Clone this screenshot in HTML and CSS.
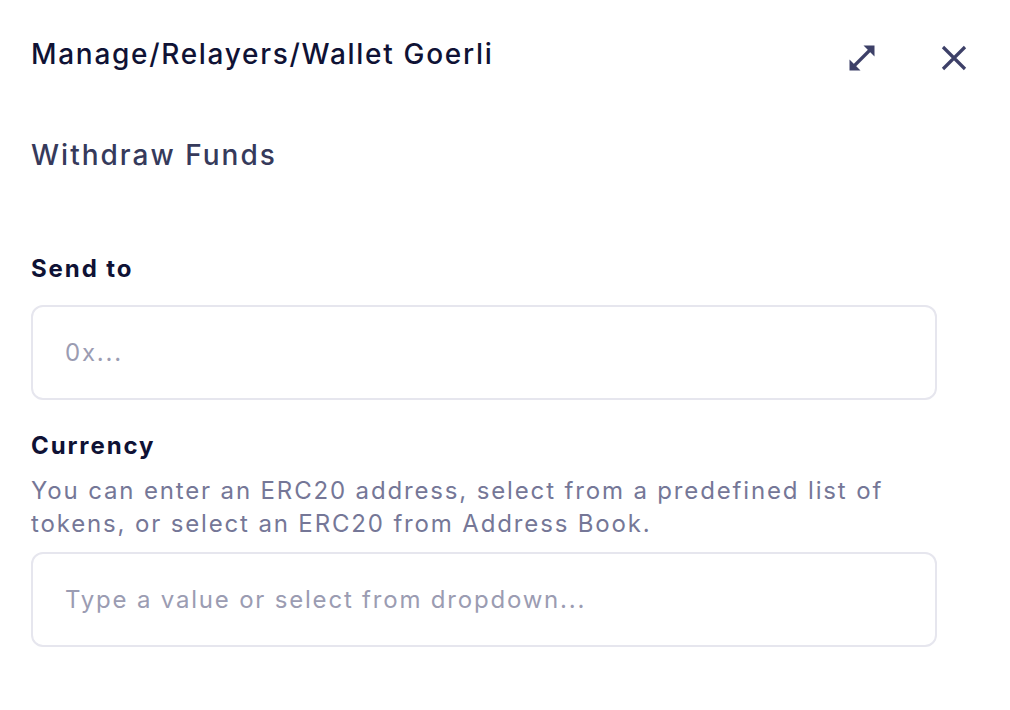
FILE: index.html
```html
<!DOCTYPE html>
<html>
<head>
<meta charset="utf-8">
<link rel="stylesheet" href="styles.css">
</head>
<body>
<div class="panel">
  <header class="head">
    <h1 class="title">Manage/Relayers/Wallet Goerli</h1>
    <div class="actions">
      <button class="icon-btn" aria-label="Expand">
        <svg width="26" height="26" viewBox="0 0 26 26"><path d="M4 22 L22 4" stroke="#3d4068" stroke-width="3.2" fill="none"/><path d="M14.5 0.5 H25.5 V11.5 Z" fill="#3d4068"/><path d="M0.5 14.5 V25.5 H11.5 Z" fill="#3d4068"/></svg>
      </button>
      <button class="icon-btn" aria-label="Close">
        <svg width="26" height="26" viewBox="0 0 26 26"><path d="M2 2 L24 24 M24 2 L2 24" stroke="#3d4068" stroke-width="3.2" fill="none"/></svg>
      </button>
    </div>
  </header>
  <h2 class="subtitle">Withdraw Funds</h2>
  <div class="field field-send">
    <label class="label">Send to</label>
    <div class="input"><span class="placeholder">0x...</span></div>
  </div>
  <div class="field field-currency">
    <label class="label">Currency</label>
    <p class="help">You can enter an ERC20 address, select from a predefined list of tokens, or select an ERC20 from Address Book.</p>
    <div class="input"><span class="placeholder">Type a value or select from dropdown...</span></div>
  </div>
</div>
</body>
</html>
```
FILE: styles.css
```css
* { box-sizing: border-box; }
html, body { margin: 0; padding: 0; background: #fff; }
body { font-family: Inter, "Noto Sans", sans-serif; }
.panel { padding: 30px 73px 0 31px; }
.head { display: flex; align-items: center; justify-content: space-between; height: 48px; }
.title { margin: 0; font-size: 28px; font-weight: 450; color: #0f1235; letter-spacing: 1.7px; }
.actions { display: flex; gap: 66px; margin-right: -30px; margin-top: 8px; }
.icon-btn { border: 0; background: none; padding: 0; width: 26px; height: 26px; display: flex; cursor: pointer; }
.subtitle { margin: 59px 0 0; font-size: 28px; font-weight: 450; color: #363a5b; line-height: 36px; letter-spacing: 2px; }
.field { display: flex; flex-direction: column; }
.label { font-size: 24px; font-weight: 700; color: #0f1235; line-height: 30px; letter-spacing: 1.9px; }
.field-send { margin-top: 81px; }
.field-currency { margin-top: 31px; }
.input { margin-top: 21px; height: 95px; border: 2px solid #e6e6ee; border-radius: 12px; display: flex; align-items: center; padding: 0 32px; }
.help + .input { margin-top: 12px; }
.placeholder { font-size: 24px; color: #9b9cb2; letter-spacing: 1.8px; }
.help { margin: 13px 0 0; font-size: 24px; line-height: 33px; color: #757797; letter-spacing: 1.85px; max-width: 870px; }
```
